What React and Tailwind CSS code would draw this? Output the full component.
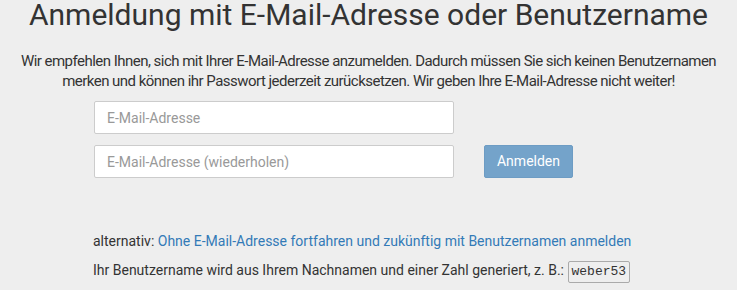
export default function App() {
  return (
    <div className="min-h-[290px] bg-[#eeeeee] text-[#333333] font-['Roboto',sans-serif] overflow-hidden">
      <h1 className="text-center text-[30px] leading-[30px] font-normal whitespace-nowrap">
        Anmeldung mit E-Mail-Adresse oder Benutzername
      </h1>

      <p className="mt-[21px] text-center text-[15px] leading-[20px] tracking-[-0.035em] whitespace-nowrap">
        Wir empfehlen Ihnen, sich mit Ihrer E-Mail-Adresse anzumelden. Dadurch müssen Sie sich keinen Benutzernamen
        <br />
        merken und können ihr Passwort jederzeit zurücksetzen. Wir geben Ihre E-Mail-Adresse nicht weiter!
      </p>

      <form className="mt-[10px] pl-[94px]" onSubmit={(e) => e.preventDefault()}>
        <input
          type="email"
          placeholder="E-Mail-Adresse"
          className="block w-[360px] h-[33px] bg-white border border-[#cccccc] rounded-[2px] px-[12px] text-[14px] placeholder:text-[#999999] outline-none"
        />
        <div className="flex items-center mt-[11px]">
          <input
            type="email"
            placeholder="E-Mail-Adresse (wiederholen)"
            className="block w-[360px] h-[33px] bg-white border border-[#cccccc] rounded-[2px] px-[12px] text-[14px] placeholder:text-[#999999] outline-none"
          />
          <button
            type="submit"
            className="ml-[30px] w-[89px] h-[33px] bg-[#74a3ca] text-white text-[14px] rounded-[2px] border border-[#6d9cc4]"
          >
            Anmelden
          </button>
        </div>
      </form>

      <div className="pl-[93px] mt-[53px] text-[14px] whitespace-nowrap">
        <p className="leading-[20px]">
          alternativ:{" "}
          <a href="#" className="text-[#337ab7]">
            Ohne E-Mail-Adresse fortfahren und zukünftig mit Benutzernamen anmelden
          </a>
        </p>
        <p className="mt-[9px] leading-[20px]">
          Ihr Benutzername wird aus Ihrem Nachnamen und einer Zahl generiert, z. B.:{" "}
          <code className="inline-block font-['Liberation_Mono',monospace] text-[13px] leading-[18px] border border-[#aaaaaa] rounded-[2px] px-[3px] py-[1px]">
            weber53
          </code>
        </p>
      </div>
    </div>
  );
}
